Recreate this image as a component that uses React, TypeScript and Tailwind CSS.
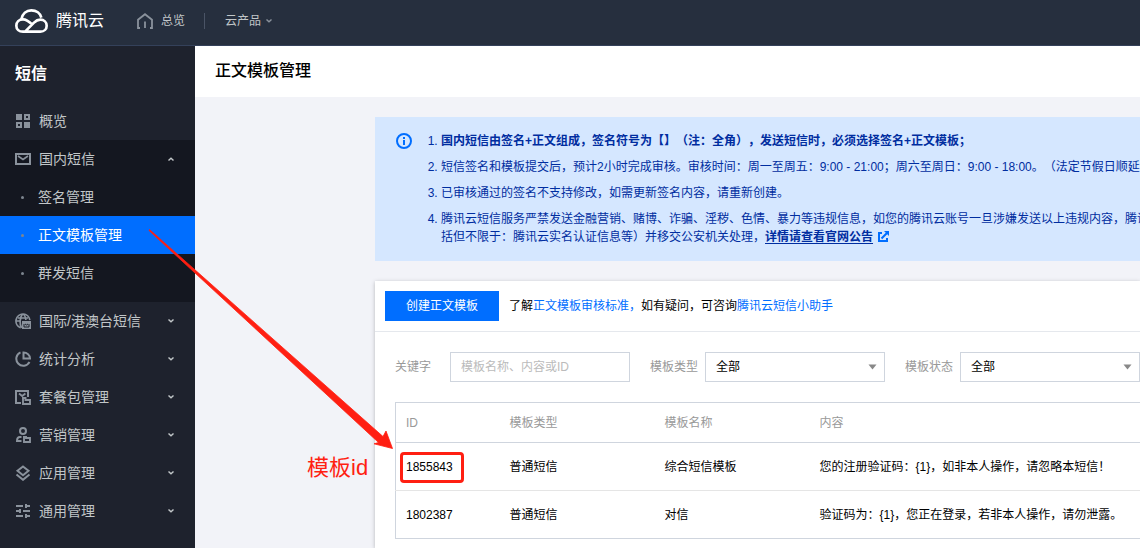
import { useState } from "react";
import type { ReactNode } from "react";
import clsx from "clsx";

interface MenuItem {
  label: string;
  icon: ReactNode;
}

interface Template {
  id: string;
  type: string;
  name: string;
  content: string;
}

const templates: Template[] = [
  {
    id: "1855843",
    type: "普通短信",
    name: "综合短信模板",
    content: "您的注册验证码：{1}，如非本人操作，请忽略本短信！",
  },
  {
    id: "1802387",
    type: "普通短信",
    name: "对信",
    content: "验证码为：{1}，您正在登录，若非本人操作，请勿泄露。",
  },
];

const smsPages = ["签名管理", "正文模板管理", "群发短信"];

function Icon({ children }: { children: ReactNode }) {
  return (
    <svg
      className="h-4 w-4 shrink-0 text-[#8a929c]"
      viewBox="0 0 16 16"
      fill="none"
      stroke="currentColor"
      strokeWidth="2"
      aria-hidden="true"
    >
      {children}
    </svg>
  );
}

function OverviewIcon() {
  return (
    <Icon>
      <path d="M1 1h6v6H1zM9 9h6v6H9z" fill="currentColor" stroke="none" />
      <path d="M10 2h4v4h-4zM2 10h4v4H2z" />
    </Icon>
  );
}

function MailIcon() {
  return (
    <Icon>
      <path d="M1 3h14v10H1z" />
      <path d="M3 5l5 3.5L13 5" strokeWidth="1.6" />
    </Icon>
  );
}

const moreMenus: MenuItem[] = [
  {
    label: "国际/港澳台短信",
    icon: (
      <Icon>
        <path d="M5.5 14.6A7 7 0 1 1 14.9 7M1 8h5M3 5h10" strokeWidth="1.7" />
        <path d="M6.5 15C4.5 11 4.5 5 7.5 1M8.5 1c1.6 1.6 2.2 3.6 2.4 6" strokeWidth="1.7" />
        <path d="M7 8h9v8H7z" fill="currentColor" stroke="none" />
        <path d="M9 11v3h5v-3M10 11l1.5 1 1.5-1" stroke="#1e222d" strokeWidth="1" />
      </Icon>
    ),
  },
  {
    label: "统计分析",
    icon: (
      <Icon>
        <path d="M5.5 1.3A7 7 0 1 0 14.5 11" />
        <path d="M8.5 1.5v6H15C15 4 12 1.5 8.5 1.5z" />
      </Icon>
    ),
  },
  {
    label: "套餐包管理",
    icon: (
      <Icon>
        <path d="M6 14H1V2h12v6" />
        <path d="M4 4.500l3.200 2.500 3.200-2.500" strokeWidth="1.800" />
        <path d="M7 9h3.500v2H15v4H8V9" strokeWidth="1.900" />
      </Icon>
    ),
  },
  {
    label: "营销管理",
    icon: (
      <Icon>
        <circle cx="8" cy="4" r="3" />
        <path d="M6.5 10H5c-2 0-3 1.5-3 4h4.500" />
        <path d="M8 10h3v1h4v4H9v-5" strokeWidth="1.900" />
      </Icon>
    ),
  },
  {
    label: "应用管理",
    icon: (
      <Icon>
        <path d="M8 1.500l5.500 4.300L8 10.200 2.500 5.800z" />
        <path d="M1.500 9.500L8 14.800l6.500-5.300" />
      </Icon>
    ),
  },
  {
    label: "通用管理",
    icon: (
      <Icon>
        <path d="M1 3h7M11 3h4M1 8h4M8 8h7M1 13h7M11 13h4" />
        <path d="M11 1v4M5 6v4M11 11v4" />
      </Icon>
    ),
  },
];

function Chevron({ up = false, className }: { up?: boolean; className?: string }) {
  return (
    <svg
      className={clsx("h-2 w-2 shrink-0", up && "rotate-180", className)}
      viewBox="0 0 8 8"
      fill="none"
      stroke="currentColor"
      strokeWidth="1.5"
      aria-hidden="true"
    >
      <path d="M1.5 2.500L4 4.700l2.500-2.200" />
    </svg>
  );
}

function TopBar() {
  return (
    <header className="flex h-[46px] shrink-0 items-center border-b border-[#34415a] bg-[#262f3e] pb-1 pl-[15px] text-xs text-[#c1c6c8]">
      <a href="#" className="flex items-center gap-2 text-base text-white">
        <svg className="h-6 w-[33px]" viewBox="0 0 99 72" fill="none" stroke="currentColor" strokeWidth="8" aria-hidden="true">
          <path d="M19 31C22 14 34 4 49 4c15 0 27 9 30 22" />
          <path d="M52 47C42 37 34 31 24 31 12 31 4 39 4 50s8 18 20 18h52c12 0 19-8 19-18s-8-18-19-18c-8 0-13 3-19 9L31 67" />
        </svg>
        腾讯云
      </a>
      <a href="#" className="ml-[33px] flex items-center gap-2">
        <svg className="h-4 w-4 text-[#8a929c]" viewBox="0 0 16 16" fill="none" stroke="currentColor" strokeWidth="1.800" aria-hidden="true">
          <path d="M3 15H1V6.800L8 1.200l7 5.600V15h-2M8 8.500V15" />
        </svg>
        总览
      </a>
      <span className="mr-5 ml-[19px] h-4 w-px bg-[#4a5466]" />
      <button type="button" className="flex items-center gap-1">
        云产品
        <Chevron className="text-[#8a929c]" />
      </button>
    </header>
  );
}

function Sidebar() {
  const [active, setActive] = useState("正文模板管理");

  return (
    <nav className="w-[195px] shrink-0 bg-[#1e222d] text-sm text-[#c1c6c8]">
      <h2 className="flex h-14 items-center px-[15px] text-base font-bold text-white">短信</h2>
      <a href="#" className="flex h-[38px] items-center gap-2 px-[15px]">
        <OverviewIcon />
        概览
      </a>
      <div className="bg-[#141720] pb-[10px]">
        <button type="button" className="flex h-[38px] w-full items-center gap-2 px-[15px]">
          <MailIcon />
          国内短信
          <Chevron up className="mr-[5px] ml-auto" />
        </button>
        {smsPages.map((page) => (
          <a
            key={page}
            href="#"
            onClick={() => setActive(page)}
            className={clsx(
              "flex h-[38px] items-center gap-[14px] px-[21px]",
              page === active && "bg-[#006eff] text-white"
            )}
          >
            <span className="h-[3px] w-[3px] rounded-full bg-[#7d858f]" />
            {page}
          </a>
        ))}
      </div>
      {moreMenus.map((item) => (
        <button key={item.label} type="button" className="flex h-[38px] w-full items-center gap-2 px-[15px]">
          {item.icon}
          {item.label}
          <Chevron className="mr-[5px] ml-auto" />
        </button>
      ))}
    </nav>
  );
}

function Notice() {
  return (
    <div className="flex gap-[14px] bg-[#d5e7ff] pt-[15px] pb-[15px] pl-5 text-xs leading-[18px] text-[#002da0]">
      <svg className="h-[18px] w-[18px] shrink-0 text-[#006eff]" viewBox="0 0 18 18" fill="none" stroke="currentColor" strokeWidth="2" aria-hidden="true">
        <circle cx="9" cy="9" r="7" />
        <path d="M9 8v5M9 5v2" />
      </svg>
      <ol className="flex list-decimal flex-col gap-2 pl-[14px]">
        <li>
          <strong>国内短信由签名+正文组成，签名符号为【】（注：全角），发送短信时，必须选择签名+正文模板；</strong>
        </li>
        <li>
          短信签名和模板提交后，预计2小时完成审核。审核时间：周一至周五：9:00 - 21:00；周六至周日：9:00 - 18:00。（法定节假日顺延
        </li>
        <li>已审核通过的签名不支持修改，如需更新签名内容，请重新创建。</li>
        <li>
          腾讯云短信服务严禁发送金融营销、赌博、诈骗、淫秽、色情、暴力等违规信息，如您的腾讯云账号一旦涉嫌发送以上违规内容，腾讯
          <br />
          括但不限于：腾讯云实名认证信息等）并移交公安机关处理，
          <a href="#" className="font-bold underline underline-offset-2">
            详情请查看官网公告
          </a>
          <svg className="ml-1 inline h-3 w-3 align-[-2px] text-[#006eff]" viewBox="0 0 12 12" fill="none" stroke="currentColor" strokeWidth="2" aria-hidden="true">
            <path d="M5 2H2v8h8V7M4.500 7.500L10 2" />
            <path d="M7 0h5v5z" fill="currentColor" stroke="none" />
          </svg>
        </li>
      </ol>
    </div>
  );
}

function FilterSelect({ id, label }: { id: string; label: string }) {
  return (
    <div className="flex shrink-0 items-center">
      <label htmlFor={id} className="w-[55px] text-[#999]">
        {label}
      </label>
      <div className="relative">
        <select id={id} className="h-[30px] w-[180px] appearance-none border border-[#cfd5de] bg-white px-[10px] text-black">
          <option>全部</option>
        </select>
        <svg className="pointer-events-none absolute top-3 right-2 h-[6px] w-[9px] text-[#888]" viewBox="0 0 9 6" fill="currentColor" aria-hidden="true">
          <path d="M0.500 0.500h8L4.500 5.500z" />
        </svg>
      </div>
    </div>
  );
}

function TemplateTable() {
  return (
    <table className="w-full border border-r-0 border-[#cfd5de] text-left">
      <thead>
        <tr className="h-10 border-b border-[#cfd5de] text-[#999]">
          <th className="w-[104px] pl-[10px] font-normal">ID</th>
          <th className="w-[155px] pl-[10px] font-normal">模板类型</th>
          <th className="w-[155px] pl-[10px] font-normal">模板名称</th>
          <th className="pl-[10px] font-normal">内容</th>
        </tr>
      </thead>
      <tbody>
        {templates.map((template) => (
          <tr key={template.id} className="h-12 border-b border-[#e5e5e5] last:border-[#cfd5de]">
            <td className="pl-[10px]">{template.id}</td>
            <td className="pl-[10px]">{template.type}</td>
            <td className="pl-[10px]">{template.name}</td>
            <td className="pl-[10px]">{template.content}</td>
          </tr>
        ))}
      </tbody>
    </table>
  );
}

// Red box, label and arrow drawn over the page to point out the template id
function Annotation() {
  return (
    <div className="pointer-events-none absolute inset-0">
      <svg className="absolute top-[225px] left-[145px] h-[230px] w-[255px]" viewBox="145 225 255 230" aria-hidden="true">
        <path
          d="M149.500 229.500L383 436.500 386 431l6.500 17.500-18.500-4.700 4.500-1.300L149 230.500z"
          fill="#ff1f12"
          stroke="#ff1f12"
          strokeWidth="0.800"
        />
      </svg>
      <span className="absolute top-[452px] left-[307px] text-[22px] leading-8 text-[#ff1f12]">模板id</span>
      <span className="absolute top-[452px] left-[400px] h-[31px] w-16 rounded-[4px] border-3 border-[#ff1f12]" />
    </div>
  );
}

export default function App() {
  return (
    <div className="relative flex min-h-screen flex-col overflow-hidden bg-[#f2f3f8] font-['Liberation_Sans','Noto_Sans_CJK_SC',sans-serif] text-xs text-black [text-spacing-trim:space-all]">
      <TopBar />
      <div className="flex flex-1">
        <Sidebar />
        <main className="flex min-w-0 flex-1 flex-col overflow-hidden whitespace-nowrap">
          <h1 className="flex h-[51px] items-center bg-white px-5 pb-px text-base font-medium">正文模板管理</h1>
          <div className="flex flex-1 flex-col gap-5 pt-5 pl-[180px]">
            <Notice />
            <section className="flex-1 bg-white shadow-[0_1px_4px_rgba(0,0,0,0.25)]">
              <div className="flex items-center gap-[10px] border-b border-[#e5e8ed] p-[10px]">
                <button type="button" className="h-[30px] bg-[#006eff] px-[21px] text-white">
                  创建正文模板
                </button>
                <p>
                  了解
                  <a href="#" className="text-[#006eff]">正文模板审核标准，</a>
                  如有疑问，可咨询
                  <a href="#" className="text-[#006eff]">腾讯云短信小助手</a>
                </p>
              </div>
              <div className="pt-5 pl-5">
                <form className="flex gap-5 pb-5">
                  <div className="flex shrink-0 items-center">
                    <label htmlFor="keyword" className="w-[55px] text-[#999]">
                      关键字
                    </label>
                    <input
                      id="keyword"
                      type="text"
                      placeholder="模板名称、内容或ID"
                      className="h-[30px] w-[180px] border border-[#cfd5de] px-[10px] placeholder:text-[#bbb]"
                    />
                  </div>
                  <FilterSelect id="type" label="模板类型" />
                  <FilterSelect id="status" label="模板状态" />
                </form>
                <TemplateTable />
              </div>
            </section>
          </div>
        </main>
      </div>
      <Annotation />
    </div>
  );
}
